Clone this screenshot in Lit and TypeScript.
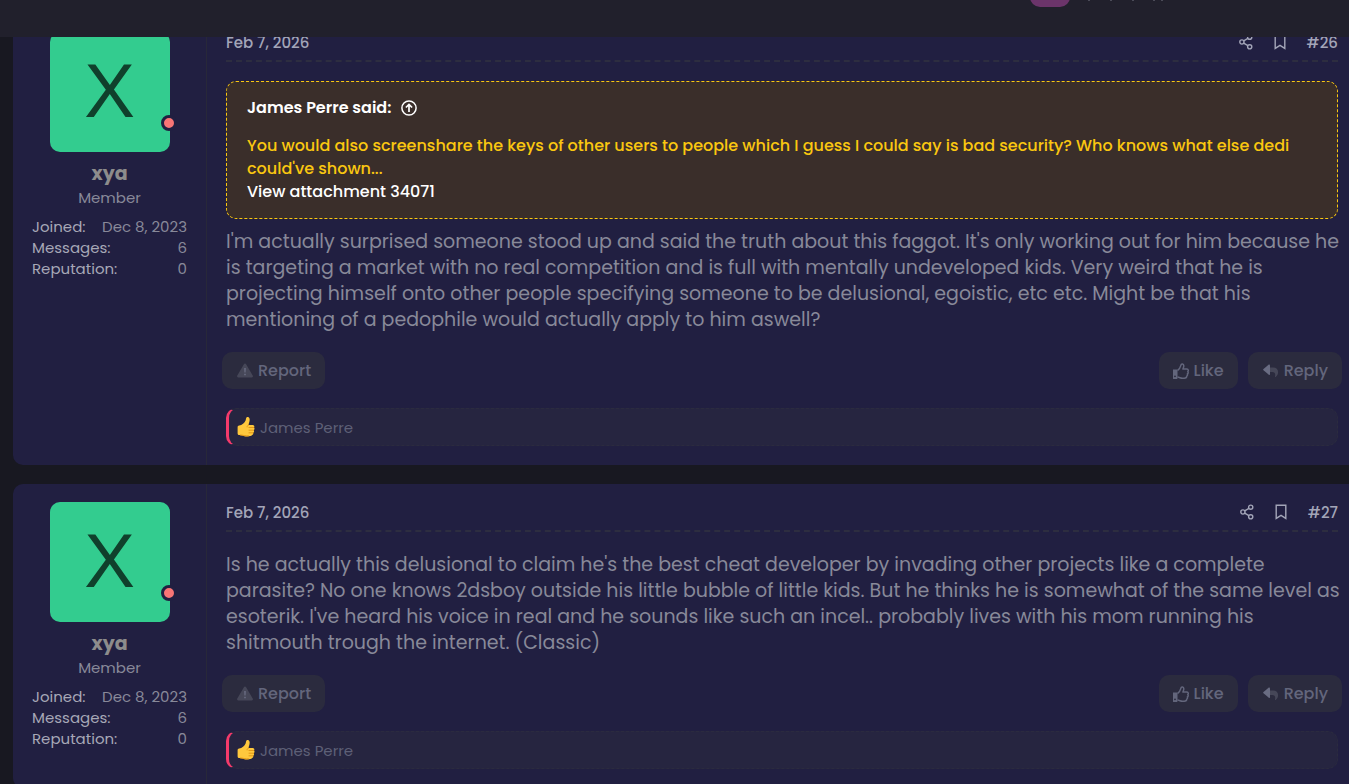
import { LitElement, html, css, svg, nothing } from "lit";
import { customElement, property } from "lit/decorators.js";

interface Quote {
  author: string;
  text: string;
  attachment: string;
}

interface Post {
  number: number;
  date: string;
  quote?: Quote;
  body: string;
  likedBy: string;
}

const posts: Post[] = [
  {
    number: 26,
    date: "Feb 7, 2026",
    quote: {
      author: "James Perre",
      text: "You would also screenshare the keys of other users to people which I guess I could say is bad security? Who knows what else dedi could've shown...",
      attachment: "View attachment 34071",
    },
    body: "I'm actually surprised someone stood up and said the truth about this faggot. It's only working out for him because he is targeting a market with no real competition and is full with mentally undeveloped kids. Very weird that he is projecting himself onto other people specifying someone to be delusional, egoistic, etc etc. Might be that his mentioning of a pedophile would actually apply to him aswell?",
    likedBy: "James Perre",
  },
  {
    number: 27,
    date: "Feb 7, 2026",
    body: "Is he actually this delusional to claim he's the best cheat developer by invading other projects like a complete parasite? No one knows 2dsboy outside his little bubble of little kids. But he thinks he is somewhat of the same level as esoterik. I've heard his voice in real and he sounds like such an incel.. probably lives with his mom running his shitmouth trough the internet. (Classic)",
    likedBy: "James Perre",
  },
];

const shareIcon = svg`<svg width="14" height="16" viewBox="0 0 14 16" fill="none" stroke="currentColor" stroke-width="1.4">
  <circle cx="10.7" cy="3.2" r="2.1"/><circle cx="2.9" cy="8" r="2.1"/><circle cx="10.7" cy="12.8" r="2.1"/>
  <path d="M4.7 6.9 8.9 4.3M4.7 9.1l4.2 2.6"/></svg>`;

const bookmarkIcon = svg`<svg width="12" height="16" viewBox="0 0 12 16" fill="none" stroke="currentColor" stroke-width="1.4">
  <path d="M1.2 1.2h9.6v13.2L6 11.4l-4.8 3z"/></svg>`;

const upIcon = svg`<svg width="16" height="16" viewBox="0 0 16 16" fill="none" stroke="currentColor" stroke-width="1.5">
  <circle cx="8" cy="8" r="7.1"/><path d="M8 12V4.6M4.9 7.5 8 4.4l3.1 3.1" stroke-width="1.7"/></svg>`;

const warnIcon = svg`<svg width="16" height="15" viewBox="0 0 16 15">
  <path d="M6.9 1.2a1.3 1.3 0 0 1 2.2 0l6.6 11.3a1.2 1.2 0 0 1-1.1 1.9H1.4a1.2 1.2 0 0 1-1.1-1.9z" fill="#464758"/>
  <path d="M7.2 5h1.6l-.2 4.6H7.4zM7.2 10.7h1.6v1.5H7.2z" fill="#6a6d83"/></svg>`;

const thumbIcon = svg`<svg width="16" height="16" viewBox="0 0 16 16">
  <path fill="currentColor" fill-rule="evenodd" d="M0 6.4h3.6c.6 0 .9.4.9.9V15c0 .6-.4 1-.9 1H.6a.6.6 0 0 1-.6-.6zM2 12.4a.9.9 0 1 0 0 1.8.9.9 0 0 0 0-1.8z"/>
  <path fill="none" stroke="currentColor" stroke-width="1.5" stroke-linejoin="round" d="M4.500 7.500C7 6.200 7.300 4.300 7.900 2.100 8.200.6 10.700.5 10.800 2.900c0 1.300-.6 2-.9 3.100h4c1.600.2 1.700 1.800.9 2.500.5.8.4 1.800-.4 2.400.3.900 0 1.700-.6 2.100 0 1.500-.9 2.200-2.600 2.200H9.400c-1.900 0-2.700-.8-4.900-1.100"/></svg>`;

const replyIcon = svg`<svg width="16" height="14" viewBox="0 0 16 14">
  <path fill="#464758" d="M6 3.600h4.300c2.900 0 4.800 1.900 4.800 4.700 0 2.200-1.100 3.600-2.500 4.700-.3.200-.7 0-.6-.4.700-2.800-.1-4.600-2.900-4.600H6z"/>
  <path fill="#696c82" d="M7 1.200v9c0 .7-.7 1-1.200.6L.5 6.300a.8.800 0 0 1 0-1.200L5.800.6C6.300.2 7 .5 7 1.200z"/></svg>`;

const likeEmoji = svg`<svg width="18" height="20" viewBox="0 0 18 20" role="img" aria-label="Like">
  <path fill="#ffc83d" d="M.6 10.200c0-1 .5-1.600 1.500-1.700C5 8.200 7.600 6 8.600 3.500c.4-1.200.3-2.200.9-3 .9-.9 2.800-.3 3.100 1.400.3 2.100-.6 4-1.100 6h4.300c1.700 0 2 1.900 1 2.600 1.100.7.900 2.200-.1 2.700.7.800.5 2.200-.6 2.600.5.900 0 2.100-1 2.300-.9 1.300-3.900 1.600-6.900 1.300-2.400-.2-3.600-1.300-5.900-1.300-1.200 0-1.700-.8-1.700-2.200z"/>
  <path fill="none" stroke="#e09312" stroke-width=".9" stroke-linecap="round" d="M11.500 8c-1 .4-1.400 1.100-1.400 1.900M12 10.500h4.800M12 13.200h4.600M12 15.800h4M3.500 18c2.300.1 4.800 1 8 .9"/></svg>`;

@customElement("forum-post")
class ForumPost extends LitElement {
  @property({ attribute: false }) post!: Post;

  static styles = css`
    :host { display: block; }
    .post {
      display: grid;
      grid-template-columns: 194px minmax(0, 1fr);
      background: #211f41;
      border-radius: 10px 0 0 10px;
      color: #888999;
    }
    a { color: inherit; text-decoration: none; }
    svg { display: block; flex: none; }
    .user {
      box-sizing: border-box;
      padding: 18px 19px;
      border-right: 1px solid #282839;
      text-align: center;
    }
    .avatar {
      position: relative;
      display: block;
      width: 120px;
      height: 120px;
      margin: 0 auto;
      border-radius: 10px;
      background: #33cc8f;
      color: #10402c;
      font: 400 76px/118px "Liberation Sans", Arial, sans-serif;
    }
    .status {
      position: absolute;
      right: -7px;
      bottom: 21px;
      width: 10px;
      height: 10px;
      border: 3px solid #211f41;
      border-radius: 50%;
      background: #f87575;
    }
    .name { margin: 9px 0 0; font-size: 19px; line-height: 26px; font-weight: 700; color: #8d8c8c; }
    .role { font-size: 15px; line-height: 22px; }
    .stats { margin: 7px 0 0; font-size: 15px; line-height: 21px; }
    .stat { display: flex; justify-content: space-between; }
    .stat dt { color: #a7a8b7; }
    .stat dd { margin: 0; }
    .main { padding: 16px 11px 19px 19px; }
    .meta {
      display: flex;
      align-items: center;
      gap: 21px;
      height: 32px;
      box-sizing: border-box;
      padding-bottom: 6px;
      border-bottom: 2px dashed #2d2d40;
      margin-bottom: 19px;
      font-size: 15px;
      font-weight: 500;
      color: #a3a5b8;
    }
    .date { margin-right: auto; }
    .quote {
      margin: 0 0 9px;
      padding: 14px 20px 15px;
      border: 1px dashed #fac710;
      border-radius: 10px;
      background: #3a2e2a;
      color: #fac710;
      font-size: 16px;
      line-height: 23px;
      font-weight: 500;
    }
    .source { display: flex; align-items: center; gap: 10px; margin-bottom: 15px; color: #fff; font-weight: 600; }
    .quote p { margin: 0; }
    .attachment { color: #fff; }
    .body { margin: 0 -4px 19px 0; padding-top: 1px; font-size: 19px; line-height: 26px; }
    .actions { display: flex; gap: 10px; margin: 0 -4px 19px; }
    .action {
      display: flex;
      align-items: center;
      gap: 5px;
      height: 37px;
      padding: 0 14px;
      border: 0;
      border-radius: 10px;
      background: #2b2b3e;
      color: #63667c;
      font: inherit;
      font-size: 16px;
      font-weight: 500;
    }
    .report { margin-right: auto; padding-left: 15px; }
    .reply { padding-left: 15px; }
    .reactions {
      display: flex;
      align-items: center;
      gap: 5px;
      box-sizing: border-box;
      height: 38px;
      padding-left: 8px;
      border: 1px dashed #2b2b3f;
      border-left: 3px solid #f43a6b;
      border-radius: 10px;
      background: #262540;
      color: #5e6077;
      font-size: 15px;
    }
  `;

  render() {
    const { number, date, quote, body, likedBy } = this.post;
    return html`
      <article class="post">
        <section class="user">
          <a class="avatar" href="#xya">X<span class="status"></span></a>
          <h4 class="name"><a href="#xya">xya</a></h4>
          <div class="role">Member</div>
          <dl class="stats">
            <div class="stat"><dt>Joined:</dt><dd>Dec 8, 2023</dd></div>
            <div class="stat"><dt>Messages:</dt><dd>6</dd></div>
            <div class="stat"><dt>Reputation:</dt><dd>0</dd></div>
          </dl>
        </section>
        <div class="main">
          <header class="meta">
            <a class="date" href="#post"><time>${date}</time></a>
            <a href="#share" aria-label="Share">${shareIcon}</a>
            <a href="#bookmark" aria-label="Add bookmark">${bookmarkIcon}</a>
            <a href="#post">#${number}</a>
          </header>
          ${quote
            ? html`<blockquote class="quote">
                <a class="source" href="#source">${quote.author} said: ${upIcon}</a>
                <p>${quote.text}</p>
                <a class="attachment" href="#attachment">${quote.attachment}</a>
              </blockquote>`
            : nothing}
          <p class="body">${body}</p>
          <div class="actions">
            <button class="action report">${warnIcon}Report</button>
            <button class="action">${thumbIcon}Like</button>
            <button class="action reply">${replyIcon}Reply</button>
          </div>
          <div class="reactions">${likeEmoji}<a href="#reactions">${likedBy}</a></div>
        </div>
      </article>
    `;
  }
}

@customElement("app-root")
class AppRoot extends LitElement {
  static styles = css`
    :host {
      display: block;
      height: 100vh;
      overflow: hidden;
      background: #181821;
      font-family: "Poppins", "Inter", sans-serif;
    }
    .bar {
      position: sticky;
      top: 0;
      z-index: 1;
      display: flex;
      justify-content: flex-end;
      gap: 16px;
      height: 37px;
      box-sizing: border-box;
      padding-right: 183px;
      background: #21202c;
    }
    .pill { width: 40px; height: 24px; margin-top: -17px; border-radius: 10px; background: #6b346a; }
    .posts { display: grid; gap: 19px; margin: -23px 0 0 13px; }
  `;

  render() {
    return html`
      <header class="bar">
        <span class="pill"></span>
        <svg width="80" height="2" viewBox="0 0 80 2" fill="#4b4b58">
          <path d="M2 0h2v1H2zM24 0h2v1h-2zM46 0h2v1h-2zM67 0h2v1h-2zM75 0h2v1h-2z" />
        </svg>
      </header>
      <main class="posts">${posts.map((post) => html`<forum-post .post=${post}></forum-post>`)}</main>
    `;
  }
}
